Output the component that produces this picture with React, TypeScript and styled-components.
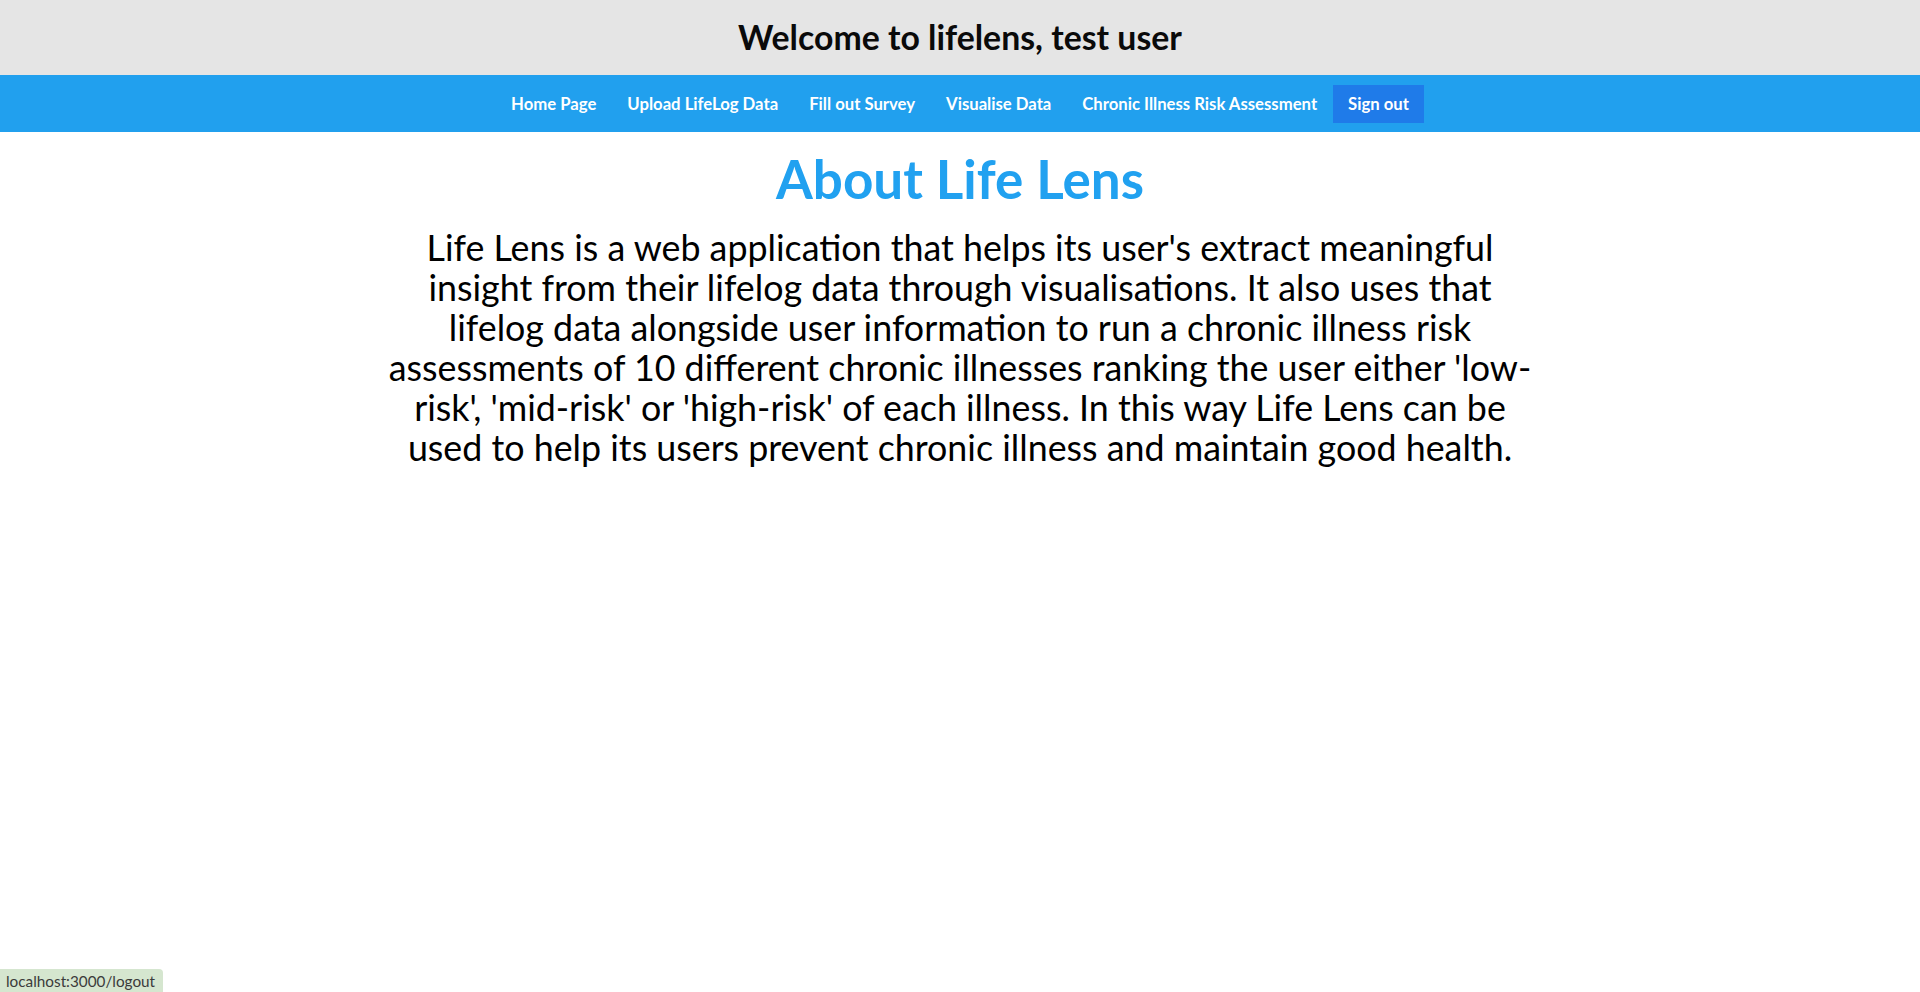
import React from "react";
import styled, { createGlobalStyle } from "styled-components";

const GlobalStyle = createGlobalStyle`
  html, body {
    margin: 0;
    padding: 0;
    background: #ffffff;
    font-family: Lato, "Open Sans", sans-serif;
    color: #000000;
  }
  * { box-sizing: border-box; }
`;

const Page = styled.div`
  display: flex;
  flex-direction: column;
  min-height: 992px;
`;

const Header = styled.header`
  height: 75px;
  background: #e5e5e5;
  display: flex;
  align-items: center;
  justify-content: center;
`;

const Title = styled.h1`
  margin: 0;
  font-size: 33.8px;
  font-weight: 700;
  line-height: 1.2;
  color: #0a0a0a;
`;

const NavBar = styled.nav`
  height: 57px;
  background: #21a0ee;
  display: flex;
  align-items: center;
  justify-content: center;
`;

const NavLink = styled.a<{ $active?: boolean }>`
  display: flex;
  align-items: center;
  height: 38px;
  padding: 0 15.5px;
  font-size: 16.7px;
  font-weight: 700;
  color: #ffffff;
  text-decoration: none;
  background: ${(p) => (p.$active ? "#1f7be9" : "transparent")};
  cursor: pointer;
`;

const Main = styled.main`
  display: flex;
  flex-direction: column;
  align-items: center;
`;

const Heading = styled.h2`
  margin: 15px 0 17px;
  font-size: 53px;
  line-height: 64px;
  font-weight: 700;
  color: #21a1f0;
`;

const About = styled.p`
  margin: 0;
  width: 60%;
  font-size: 35.8px;
  line-height: 40px;
  font-weight: 400;
  text-align: center;
  color: #000000;
`;

const StatusTip = styled.div`
  position: fixed;
  left: 0;
  bottom: 0;
  height: 23px;
  padding: 0 8px 0 6px;
  display: flex;
  align-items: center;
  background: #d5e6cf;
  border-top-right-radius: 4px;
  font-size: 15.3px;
  color: #3b3b3b;
`;

const links = [
  "Home Page",
  "Upload LifeLog Data",
  "Fill out Survey",
  "Visualise Data",
  "Chronic Illness Risk Assessment",
];

export default function App() {
  return (
    <>
      <GlobalStyle />
      <Page>
        <Header>
          <Title>Welcome to lifelens, test user</Title>
        </Header>
        <NavBar>
          {links.map((l) => (
            <NavLink key={l}>{l}</NavLink>
          ))}
          <NavLink $active href="/logout">
            Sign out
          </NavLink>
        </NavBar>
        <Main>
          <Heading>About Life Lens</Heading>
          <About>
            Life Lens is a web application that helps its user's extract meaningful insight from
            their lifelog data through visualisations. It also uses that lifelog data alongside
            user information to run a chronic illness risk assessments of 10 different chronic
            illnesses ranking the user either 'low-risk', 'mid-risk' or 'high-risk' of each
            illness. In this way Life Lens can be used to help its users prevent chronic illness
            and maintain good health.
          </About>
        </Main>
      </Page>
      <StatusTip>localhost:3000/logout</StatusTip>
    </>
  );
}
